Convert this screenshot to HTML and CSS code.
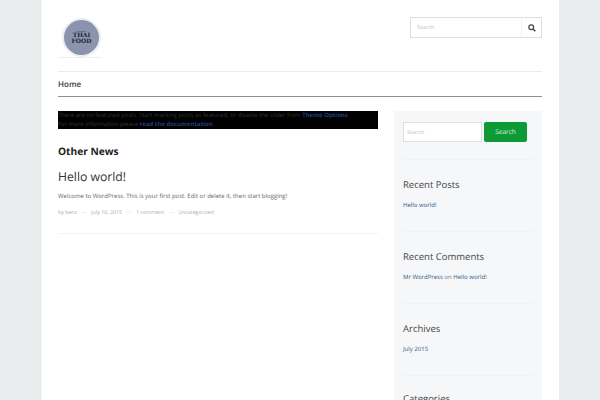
FILE: index.html
```html
<!DOCTYPE html>
<html lang="en">
<head>
<meta charset="utf-8">
<title>Thai Food</title>
<link rel="stylesheet" href="styles.css">
</head>
<body>
<div class="wrapper">
  <header class="masthead">
    <a class="logo" href="#">
      <span class="logo-disc">
        <span class="logo-small">restaurant</span>
        <span class="logo-big">THAI</span>
        <span class="logo-big">FOOD</span>
      </span>
    </a>
    <form class="top-search">
      <span class="top-search-text">Search</span>
      <span class="top-search-btn">
        <svg width="8" height="8" viewBox="0 0 10 10" aria-hidden="true"><circle cx="4" cy="4" r="3" fill="none" stroke="#444" stroke-width="1.5"/><path d="M6.2 6.2 9.2 9.2" stroke="#444" stroke-width="1.8" fill="none"/></svg>
      </span>
    </form>
  </header>
  <nav class="nav"><a href="#">Home</a></nav>
  <div class="columns">
    <main class="main">
      <div class="notice">There are no featured posts. Start marking posts as featured, or disable the slider from <a href="#">Theme Options</a>.<br>For more information please <a href="#">read the documentation</a>.</div>
      <h2 class="section-title">Other News</h2>
      <article class="post">
        <h1 class="post-title">Hello world!</h1>
        <p class="post-text">Welcome to WordPress. This is your first post. Edit or delete it, then start blogging!</p>
        <div class="post-meta">
          <span>by benz</span><span class="dash">—</span><span>July 16, 2015</span><span class="dash">—</span><span>1 comment</span><span class="dash">—</span><span>Uncategorized</span>
        </div>
      </article>
    </main>
    <aside class="sidebar">
      <section class="widget widget-search">
        <div class="side-input">Search</div>
        <div class="side-btn">Search</div>
      </section>
      <section class="widget">
        <h3 class="widget-title">Recent Posts</h3>
        <p class="widget-line"><a href="#">Hello world!</a></p>
      </section>
      <section class="widget">
        <h3 class="widget-title">Recent Comments</h3>
        <p class="widget-line"><a href="#">Mr WordPress</a> on <a href="#">Hello world!</a></p>
      </section>
      <section class="widget">
        <h3 class="widget-title">Archives</h3>
        <p class="widget-line"><a href="#">July 2015</a></p>
      </section>
      <section class="widget widget-last">
        <h3 class="widget-title">Categories</h3>
      </section>
    </aside>
  </div>
</div>
</body>
</html>
```
FILE: styles.css
```css
* { box-sizing: border-box; }
html, body { margin: 0; height: 400px; overflow: hidden; }
body { background: #e9edee; font-family: "Open Sans", sans-serif; color: #333; text-rendering: geometricPrecision; }
a { text-decoration: none; color: inherit; }
p, h1, h2, h3 { margin: 0; font-weight: 400; }

.wrapper { width: 518px; height: 400px; margin-left: 41px; padding: 0 17px 0 16px; background: #fff; border-left: 1px solid #f4f6f6; overflow: hidden; }

.masthead { height: 72px; padding-top: 17px; display: flex; justify-content: space-between; align-items: flex-start; border-bottom: 1px solid #ececec; }
.logo { display: block; width: 44px; height: 41px; border-bottom: 1px solid #f1efe8; }
.logo-disc { width: 35px; height: 35px; margin: 3px 0 0 6px; border-radius: 50%; background: #8a94ac; box-shadow: 0 0 0 2px #eceef4; display: flex; flex-direction: column; align-items: center; justify-content: center; color: #1f2436; }
.logo-small { font-size: 2px; line-height: 3px; }
.logo-big { font-family: "DejaVu Serif", serif; font-size: 6px; line-height: 6.5px; font-weight: 700; }

.top-search { width: 132px; height: 21px; display: flex; border: 1px solid #dedede; }
.top-search-text { flex: 1; font-size: 5.5px; line-height: 19px; padding-left: 6px; color: #c4c4c4; }
.top-search-btn { width: 20px; display: flex; align-items: center; justify-content: center; border-left: 1px solid #f3f3f3; }

.nav { height: 25px; border-bottom: 1px solid #8f8f8f; font-size: 8px; font-weight: 600; line-height: 25px; color: #3a3a3a; }

.columns { display: flex; justify-content: space-between; margin-top: 14px; }
.main { width: 320px; }
.notice { background: #000; color: #333; font-size: 6px; line-height: 9px; height: 18px; white-space: nowrap; }
.notice a { color: #1b3f7a; font-weight: 700; }
.section-title { font-size: 10.2px; font-weight: 700; line-height: 16px; margin-top: 14px; color: #222; }
.post { height: 67px; margin-top: 8px; border-bottom: 1px solid #f3f3f3; }
.post-title { font-size: 12.2px; line-height: 20px; color: #333; }
.post-text { font-size: 6px; line-height: 10px; margin-top: 4px; color: #666; }
.post-meta { display: flex; font-size: 5.25px; line-height: 8px; margin-top: 7px; color: #aaa; }
.dash { margin: 0 4.5px; color: #e2e2e2; }

.sidebar { width: 148px; height: 400px; background: #f6f7f9; padding: 0 9px; }
.widget { height: 72px; padding-top: 10px; border-bottom: 1px solid #f0f1f3; }
.widget-search { height: 49px; display: flex; gap: 2px; padding-top: 11px; }
.widget-last { border-bottom: 0; padding-top: 8px; }
.side-input { width: 79px; height: 20px; background: #fff; border: 1px solid #dfdfdf; font-size: 5.5px; line-height: 18px; padding-left: 3px; color: #c4c4c4; }
.side-btn { width: 43px; height: 20px; background: #0e9a36; border-radius: 2px; color: #dff3e4; font-size: 6.5px; line-height: 20px; text-align: center; }
.widget-title { font-size: 9.5px; line-height: 14px; margin-top: 8px; color: #444; }
.widget-line { font-size: 6px; line-height: 10px; margin-top: 8px; color: #777; }
.widget-line a { color: #2c5a85; }
```
